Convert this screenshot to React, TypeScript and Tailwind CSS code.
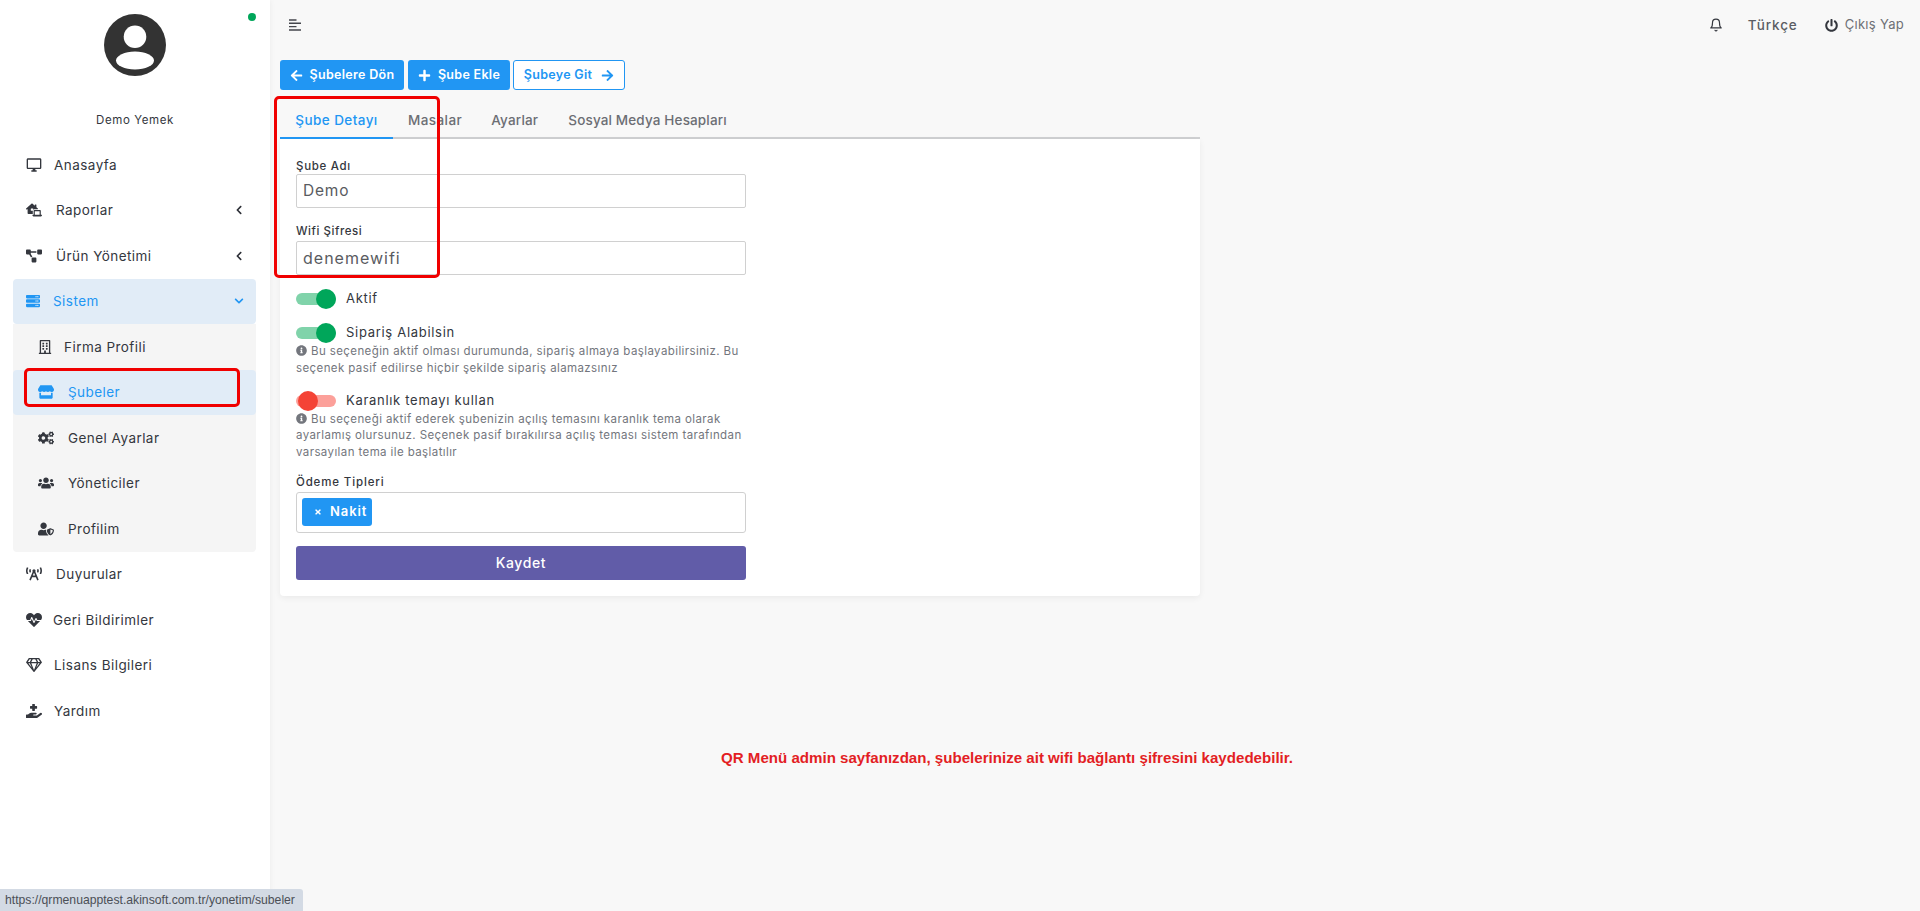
import React from "react";
import { FaLaptopHouse, FaProjectDiagram, FaServer, FaRegBuilding, FaStore, FaCogs, FaUsers, FaUserShield, FaBroadcastTower, FaHeartbeat, FaRegGem, FaHandHoldingMedical, FaPowerOff, FaArrowLeft, FaArrowRight, FaPlus, FaChevronLeft, FaChevronDown, FaInfoCircle, FaTimes } from "react-icons/fa";
import { MdOutlineDesktopWindows } from "react-icons/md";
import { LuBell } from "react-icons/lu";

const font = "font-['Inter','Liberation_Sans',sans-serif]";

function Row({ icon, label, gap, chevron, active, sub }: { icon: React.ReactNode; label: string; gap: string; chevron?: "left" | "down"; active?: boolean; sub?: boolean }) {
  return (
    <div className={`flex h-[45.5px] items-center rounded-[4px] ${sub ? "pl-[25px]" : "pl-[13px]"} pr-[12px] ${active ? "bg-[#e1ecf7] text-[#2196f3]" : "text-[#34373e]"}`}>
      <span className="flex w-[16px] shrink-0 items-center justify-start text-[16px]">{icon}</span>
      <span className={`${gap} text-[13.5px] tracking-[0.45px]`}>{label}</span>
      {chevron === "left" && <FaChevronLeft className="ml-auto text-[10px] text-[#2c2f36]" />}
      {chevron === "down" && <FaChevronDown className="ml-auto text-[10px] text-[#2196f3]" />}
    </div>
  );
}

function Toggle({ on }: { on: boolean }) {
  return (
    <span className={`relative block h-[12px] w-[40px] shrink-0 rounded-full ${on ? "bg-[#80d3aa]" : "bg-[#fca09a]"}`}>
      <span className={`absolute top-[-4px] h-[20px] w-[20px] rounded-full ${on ? "right-0 bg-[#00a65a]" : "left-[2px] bg-[#f44336]"}`} />
    </span>
  );
}

function Help({ children }: { children: React.ReactNode }) {
  return <p className="text-[11.5px] leading-[16.5px] tracking-[0.4px] text-[#73767d]"><FaInfoCircle className="mr-[4px] inline align-[-1px] text-[11px]" />{children}</p>;
}

export default function App() {
  return (
    <div className={`${font} relative flex h-[911px] w-full overflow-hidden bg-[#f8f8f8] text-[#34373e]`}>
      <aside className="w-[270px] shrink-0 bg-white shadow-[0_0_6px_rgba(0,0,0,0.06)]">
        <div className="relative h-[142px]">
          <span className="absolute left-[248px] top-[13px] h-[8px] w-[8px] rounded-full bg-[#00a65a]" />
          <div className="flex flex-col items-center pt-[14px]">
            <svg width="62" height="62" viewBox="0 0 62 62" className="block">
              <circle cx="31" cy="31" r="31" fill="#333333" />
              <circle cx="31" cy="22.7" r="11.3" fill="#fff" />
              <ellipse cx="31" cy="46.5" rx="19" ry="9" fill="#fff" />
            </svg>
            <div className="mt-[36px] text-[11.5px] tracking-[0.6px]">Demo Yemek</div>
          </div>
        </div>
        <nav className="pl-[13px] pr-[14px]">
          <Row icon={<MdOutlineDesktopWindows />} label="Anasayfa" gap="ml-[12px]" />
          <Row icon={<FaLaptopHouse />} label="Raporlar" gap="ml-[14px]" chevron="left" />
          <Row icon={<FaProjectDiagram />} label="Ürün Yönetimi" gap="ml-[14px]" chevron="left" />
          <Row icon={<FaServer className="text-[14px]" />} label="Sistem" gap="ml-[11px]" chevron="down" active />
          <div className="rounded-b-[4px] bg-[#f5f5f5]">
            <Row icon={<FaRegBuilding className="text-[14px]" />} label="Firma Profili" gap="ml-[10px]" sub />
            <Row icon={<FaStore />} label="Şubeler" gap="ml-[14px]" sub active />
            <Row icon={<FaCogs />} label="Genel Ayarlar" gap="ml-[14px]" sub />
            <Row icon={<FaUsers />} label="Yöneticiler" gap="ml-[14px]" sub />
            <Row icon={<FaUserShield />} label="Profilim" gap="ml-[14px]" sub />
          </div>
          <Row icon={<FaBroadcastTower />} label="Duyurular" gap="ml-[14px]" />
          <Row icon={<FaHeartbeat />} label="Geri Bildirimler" gap="ml-[11px]" />
          <Row icon={<FaRegGem />} label="Lisans Bilgileri" gap="ml-[12px]" />
          <Row icon={<FaHandHoldingMedical />} label="Yardım" gap="ml-[12px]" />
        </nav>
      </aside>

      <main className="min-w-0 flex-1">
        <header className="flex h-[50px] items-center pl-[19px] pr-[16px]">
          <svg width="12" height="12" viewBox="0 0 12 12" className="block"><path d="M0 1h7.5M0 4.3h12M0 7.6h7.5M0 11h12" stroke="#44464c" strokeWidth="1.4" /></svg>
          <div className="ml-auto flex items-center text-[#5a5d63]">
            <LuBell className="text-[14px] text-[#34373e]" />
            <span className="ml-[25px] text-[13.5px] font-medium tracking-[0.9px]">Türkçe</span>
            <FaPowerOff className="ml-[27px] text-[13px] text-[#34373e]" />
            <span className="ml-[7px] text-[13px] tracking-[0.3px] text-[#6e7076]">Çıkış Yap</span>
          </div>
        </header>

        <div className="ml-[10px] mt-[10px] flex h-[30px] items-stretch text-[12.5px] font-semibold tracking-[0.3px]">
          <button className="flex w-[124px] items-center justify-center gap-[7px] rounded-[3px] bg-[#2196f3] text-white"><FaArrowLeft className="text-[13px]" />Şubelere Dön</button>
          <button className="ml-[4px] flex w-[102px] items-center justify-center gap-[7px] rounded-[3px] bg-[#2196f3] text-white"><FaPlus className="text-[13px]" />Şube Ekle</button>
          <button className="ml-[3px] flex w-[112px] items-center justify-center gap-[9px] rounded-[3px] border border-[#2196f3] bg-white text-[#2196f3]">Şubeye Git<FaArrowRight className="text-[13px]" /></button>
        </div>

        <section className="ml-[10px] mt-[6px] w-[920px]">
          <div className="flex h-[43px] items-stretch border-b-2 border-[#cfd0d2] pt-[8px] text-[13.5px] font-medium tracking-[0.42px] text-[#6c6e74]">
            <div className="-mb-[2px] flex w-[113px] items-center justify-center border-b-2 border-[#2196f3] text-[#2196f3]">Şube Detayı</div>
            <div className="ml-[15px] flex items-center">Masalar</div>
            <div className="ml-[29px] flex items-center tracking-[0.2px]">Ayarlar</div>
            <div className="ml-[30px] flex items-center tracking-[0.15px]">Sosyal Medya Hesapları</div>
          </div>

          <div className="h-[457px] rounded-b-[4px] bg-white pl-[16px] pt-[19px] shadow-[0_2px_6px_rgba(0,0,0,0.06)]">
            <div className="w-[450px]">
              <label className="block text-[11.5px] font-medium leading-[16px] tracking-[0.7px]">Şube Adı</label>
              <div className="flex h-[34px] items-center rounded-[2px] border border-[#d0d0d0] bg-white pl-[6px] text-[15.5px] tracking-[0.8px] text-[#595b61]">Demo</div>
              <label className="mt-[15px] block text-[11.5px] font-medium leading-[16px] tracking-[0.55px]">Wifi Şifresi</label>
              <div className="mt-[2px] flex h-[34px] items-center rounded-[2px] border border-[#d0d0d0] bg-white pl-[6px] text-[16px] tracking-[1px] text-[#595b61]">denemewifi</div>

              <div className="mt-[14px] flex h-[20px] items-center gap-[10px] text-[13px] tracking-[0.7px]"><Toggle on />Aktif</div>
              <div className="mt-[14px] flex h-[20px] items-center gap-[10px] text-[13px] tracking-[0.7px]"><Toggle on />Sipariş Alabilsin</div>
              <Help>Bu seçeneğin aktif olması durumunda, sipariş almaya başlayabilirsiniz. Bu seçenek pasif edilirse hiçbir şekilde sipariş alamazsınız</Help>
              <div className="mt-[14.5px] flex h-[20px] items-center gap-[10px] text-[13px] tracking-[0.7px]"><Toggle on={false} />Karanlık temayı kullan</div>
              <Help>Bu seçeneği aktif ederek şubenizin açılış temasını karanlık tema olarak ayarlamış olursunuz. Seçenek pasif bırakılırsa açılış teması sistem tarafından varsayılan tema ile başlatılır</Help>

              <label className="mt-[13.5px] block text-[11.5px] font-medium leading-[16px] tracking-[0.85px]">Ödeme Tipleri</label>
              <div className="mt-[2px] flex h-[41px] items-center rounded-[3px] border border-[#d0d0d0] bg-white pl-[5px]">
                <span className="flex h-[28px] w-[70px] items-center rounded-[3px] bg-[#2196f3] pl-[12px] text-[13px] font-semibold tracking-[0.9px] text-white"><FaTimes className="mr-[8px] text-[8px]" />Nakit</span>
              </div>
              <button className="mt-[13px] block h-[34px] w-full rounded-[3px] bg-[#615ca8] text-[14px] font-medium tracking-[0.6px] text-white">Kaydet</button>
            </div>
          </div>
        </section>

        <p className="ml-[451px] mt-[154px] font-['Liberation_Sans',sans-serif] text-[15.1px] font-bold leading-[16px] text-[#e31e24]">QR Menü admin sayfanızdan, şubelerinize ait wifi bağlantı şifresini kaydedebilir.</p>
      </main>

      <div className="pointer-events-none absolute left-[274px] top-[96px] h-[182px] w-[166px] rounded-[5px] border-[3px] border-[#f00000]" />
      <div className="pointer-events-none absolute left-[24px] top-[368px] h-[39px] w-[216px] rounded-[5px] border-[3px] border-[#f00000]" />
      <div className="absolute bottom-0 left-0 flex h-[22px] w-[303px] items-center rounded-tr-[3px] bg-[#d3dae4] pl-[5px] font-['Liberation_Sans',sans-serif] text-[12.2px] text-[#4b4f56]">https://qrmenuapptest.akinsoft.com.tr/yonetim/subeler</div>
    </div>
  );
}
